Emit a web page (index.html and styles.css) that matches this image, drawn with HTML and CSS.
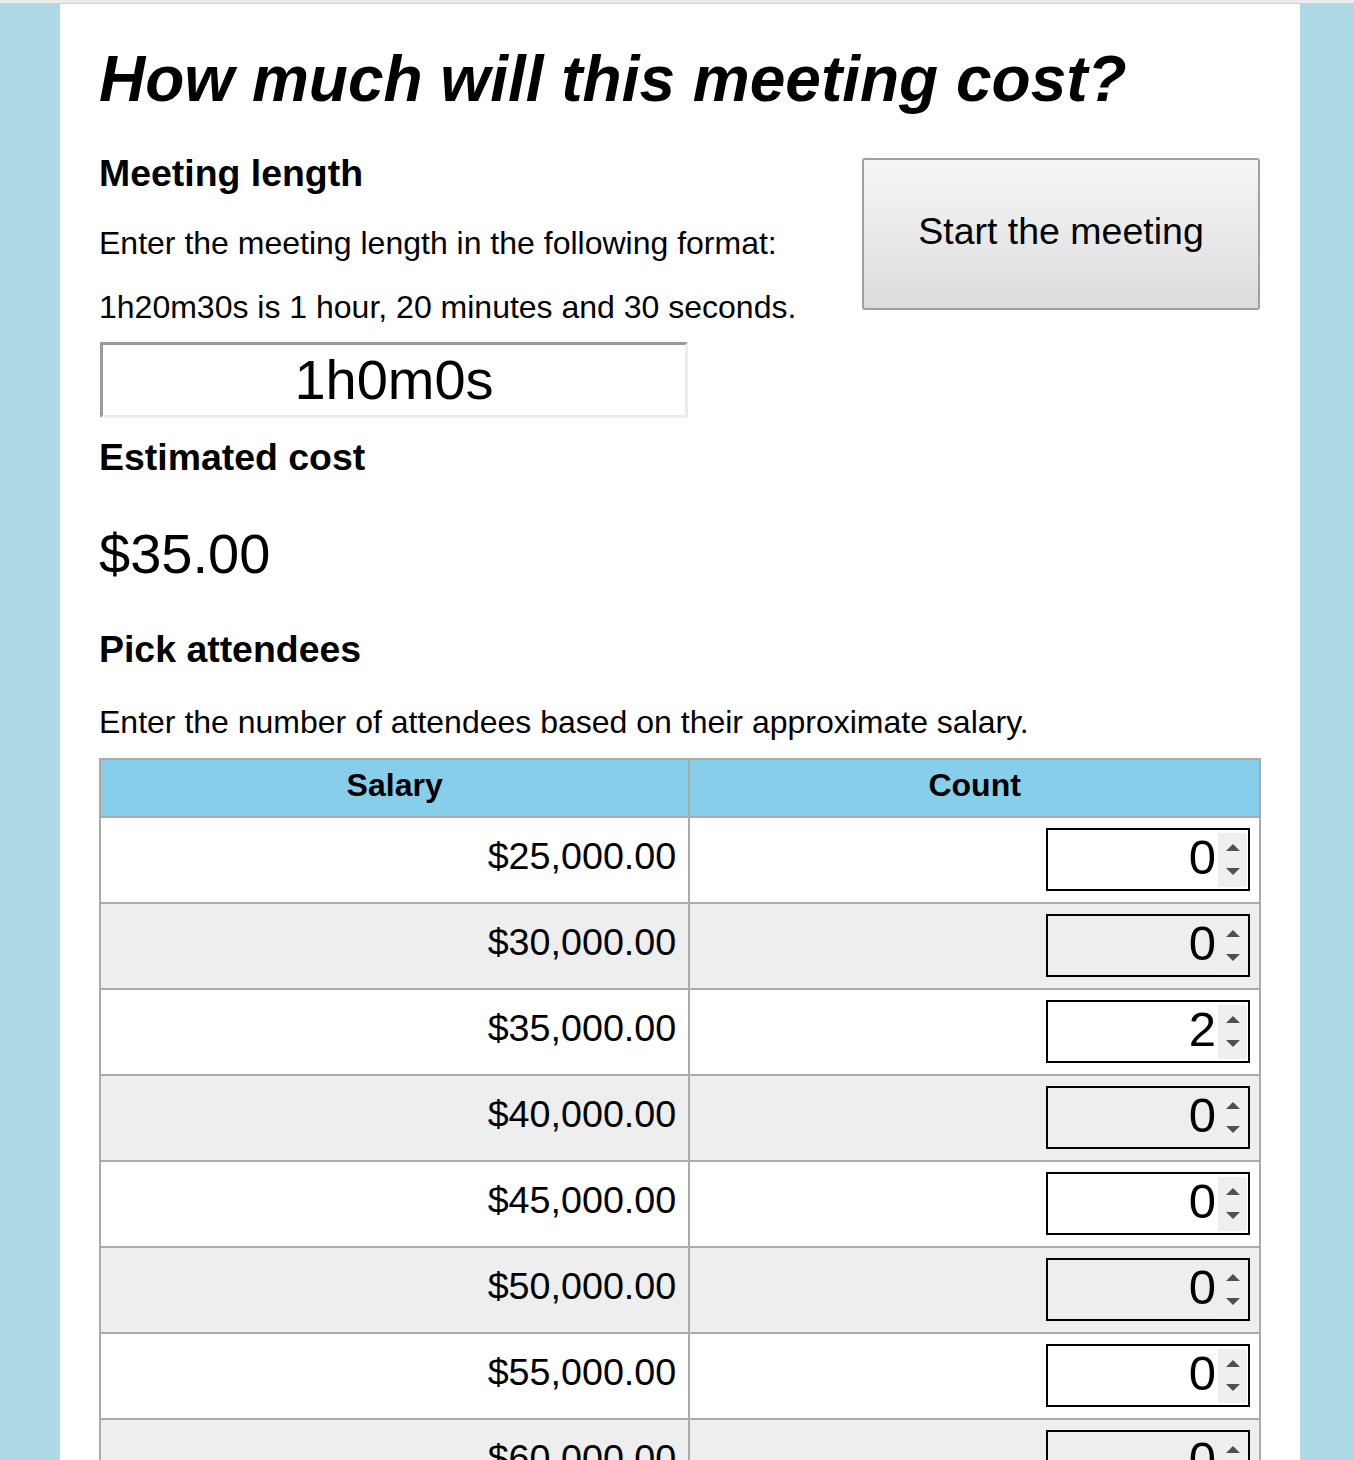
FILE: index.html
```html
<!DOCTYPE html>
<html lang="en">
<head>
<meta charset="utf-8">
<title>Meeting cost</title>
<link rel="stylesheet" href="styles.css">
</head>
<body>
<div class="topbar"></div>
<main class="page">
  <h1 class="title">How much will this meeting cost?</h1>
  <section class="setup">
    <div class="setup-left">
      <h3 class="heading heading-length">Meeting length</h3>
      <p class="hint hint-first">Enter the meeting length in the following format:</p>
      <p class="hint hint-second">1h20m30s is 1 hour, 20 minutes and 30 seconds.</p>
      <input class="duration" type="text" value="1h0m0s">
    </div>
    <button class="start" type="button">Start the meeting</button>
  </section>
  <h3 class="heading heading-estimate">Estimated cost</h3>
  <div class="cost">$35.00</div>
  <h3 class="heading heading-pick">Pick attendees</h3>
  <p class="hint hint-pick">Enter the number of attendees based on their approximate salary.</p>
  <table class="attendees">
    <thead>
      <tr><th class="col-salary">Salary</th><th>Count</th></tr>
    </thead>
    <tbody>
      <tr><td class="salary">$25,000.00</td><td class="count"><span class="spin"><input type="text" value="0"><span class="arrows"><span class="up"></span><span class="down"></span></span></span></td></tr>
      <tr><td class="salary">$30,000.00</td><td class="count"><span class="spin"><input type="text" value="0"><span class="arrows"><span class="up"></span><span class="down"></span></span></span></td></tr>
      <tr><td class="salary">$35,000.00</td><td class="count"><span class="spin"><input type="text" value="2"><span class="arrows"><span class="up"></span><span class="down"></span></span></span></td></tr>
      <tr><td class="salary">$40,000.00</td><td class="count"><span class="spin"><input type="text" value="0"><span class="arrows"><span class="up"></span><span class="down"></span></span></span></td></tr>
      <tr><td class="salary">$45,000.00</td><td class="count"><span class="spin"><input type="text" value="0"><span class="arrows"><span class="up"></span><span class="down"></span></span></span></td></tr>
      <tr><td class="salary">$50,000.00</td><td class="count"><span class="spin"><input type="text" value="0"><span class="arrows"><span class="up"></span><span class="down"></span></span></span></td></tr>
      <tr><td class="salary">$55,000.00</td><td class="count"><span class="spin"><input type="text" value="0"><span class="arrows"><span class="up"></span><span class="down"></span></span></span></td></tr>
      <tr><td class="salary">$60,000.00</td><td class="count"><span class="spin"><input type="text" value="0"><span class="arrows"><span class="up"></span><span class="down"></span></span></span></td></tr>
      <tr><td class="salary">$65,000.00</td><td class="count"><span class="spin"><input type="text" value="0"><span class="arrows"><span class="up"></span><span class="down"></span></span></span></td></tr>
      <tr><td class="salary">$70,000.00</td><td class="count"><span class="spin"><input type="text" value="0"><span class="arrows"><span class="up"></span><span class="down"></span></span></span></td></tr>
    </tbody>
  </table>
</main>
</body>
</html>
```
FILE: styles.css
```css
* { box-sizing: border-box; }
html, body { margin: 0; }
body {
  background: #add8e6;
  font-family: "Liberation Sans", Arial, sans-serif;
  font-size: 32px;
  color: #000;
}
.topbar {
  height: 4px;
  background: #ebebeb;
  border-bottom: 1px solid #cfcfcf;
}
.page {
  width: 1240px;
  margin-left: 60px;
  background: #fff;
  padding: 37.8px 39px 60px;
}
.title {
  margin: 0;
  font-size: 64px;
  line-height: 74px;
  font-style: italic;
  font-weight: bold;
}
.setup {
  display: flex;
  justify-content: space-between;
  align-items: flex-start;
}
.heading {
  margin: 0;
  font-size: 37.44px;
  line-height: 43px;
  font-weight: bold;
}
.heading-length { margin-top: 36.4px; }
.heading-estimate { margin-top: 18.5px; }
.heading-pick { margin-top: 43.4px; }
.hint {
  margin: 0;
  font-size: 32px;
  line-height: 37px;
}
.hint-first { margin-top: 30.2px; }
.hint-second { margin-top: 26.7px; }
.hint-pick { margin-top: 32.5px; }
.duration {
  display: block;
  width: 588px;
  height: 76px;
  margin: 15.9px 0 0 1px;
  padding: 0;
  border: 3px solid;
  border-color: #9a9a9a #ececec #ececec #9a9a9a;
  font-family: "Liberation Sans", Arial, sans-serif;
  font-size: 56px;
  text-align: center;
  color: #000;
  background: #fff;
  outline: none;
}
.start {
  flex-shrink: 0;
  margin: 42.2px 1px 0 0;
  width: 398px;
  height: 152px;
  padding: 0 0 5px;
  border: 2px solid #a0a0a0;
  border-radius: 3px;
  background: linear-gradient(#f6f6f6, #dcdcdc);
  font-family: "Liberation Sans", Arial, sans-serif;
  font-size: 37.5px;
  line-height: 43px;
  color: #000;
}
.cost {
  margin-top: 42.3px;
  font-size: 56px;
  line-height: 63px;
}
.attendees {
  margin-top: 17.3px;
  width: 100%;
  border-collapse: collapse;
  border: 2px solid #aaa;
}
.attendees th {
  background: #87ceeb;
  border: 2px solid #aaa;
  font-size: 32px;
  font-weight: bold;
  line-height: 37px;
  padding: 7px 0 12px;
  text-align: center;
}
.attendees .col-salary { width: 50.8%; }
.attendees td {
  border: 2px solid #aaa;
  vertical-align: middle;
  padding: 10px 9px 11px 12px;
}
.attendees tbody tr:nth-child(even) { background: #eeeeee; }
.salary {
  text-align: right;
  font-size: 37.7px;
  line-height: 43px;
}
.attendees td.salary { padding: 8px 12px 14px 12px; }
.count { text-align: right; line-height: 0; }
.spin {
  display: inline-flex;
  width: 204px;
  height: 63px;
  border: 2px solid #000;
  vertical-align: middle;
}
.spin input {
  flex: 1;
  min-width: 0;
  border: 0;
  padding: 0 2px 4px 0;
  background: transparent;
  font-family: "Liberation Sans", Arial, sans-serif;
  font-size: 49px;
  text-align: right;
  color: #000;
  outline: none;
}
.arrows {
  display: flex;
  flex-direction: column;
  width: 29px;
  margin: 3px 1px 2px 0;
  background: #efefef;
}
.up, .down {
  flex: 1;
  display: flex;
  align-items: center;
  justify-content: center;
}
.up::before {
  content: "";
  border-left: 7px solid transparent;
  border-right: 7px solid transparent;
  border-bottom: 7px solid #505050;
  margin-top: 3px;
}
.down::before {
  content: "";
  border-left: 7px solid transparent;
  border-right: 7px solid transparent;
  border-top: 7px solid #505050;
  margin-bottom: 3px;
}
```
